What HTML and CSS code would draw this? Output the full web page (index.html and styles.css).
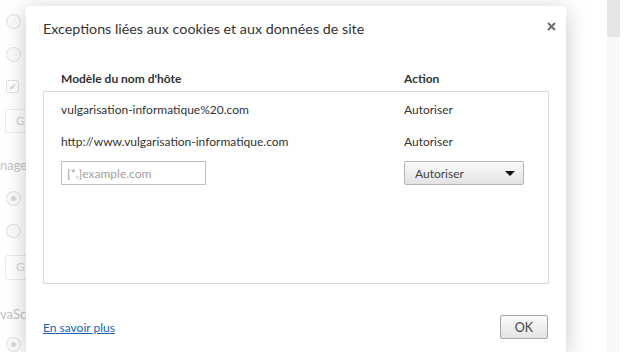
FILE: index.html
```html
<!DOCTYPE html>
<html>

<head>
    <meta charset="UTF-8">
    <title>Exceptions liées aux cookies</title>
    <link rel="stylesheet" href="styles.css">
</head>

<body>
    <div id="page">
        <div class="side">
            <div class="radio r1"></div>
            <div class="radio r2"></div>
            <div class="check">&#10004;</div>
            <div class="btn-ghost b1">G</div>
            <div class="side-label l1">nage</div>
            <div class="radio on r3"></div>
            <div class="radio r4"></div>
            <div class="btn-ghost b2">G</div>
            <div class="side-label l2">vaSc</div>
            <div class="radio on r5"></div>
        </div>
        <div class="scroll-track">
            <div class="scroll-thumb"></div>
        </div>
    </div>

    <div id="dialog">
        <div class="dialog-head">
            <div class="dialog-title">Exceptions liées aux cookies et aux données de site</div>
            <svg class="close" width="9" height="9" viewBox="0 0 9 9">
                <path d="M1 1 L8 8 M8 1 L1 8" stroke="#6e6e6e" stroke-width="2" />
            </svg>
        </div>
        <div class="dialog-body">
            <div class="list-head">
                <div class="col-host">Modèle du nom d'hôte</div>
                <div class="col-action">Action</div>
            </div>
            <div class="list">
                <div class="row">
                    <div class="col-host">vulgarisation-informatique%20.com</div>
                    <div class="col-action">Autoriser</div>
                </div>
                <div class="row">
                    <div class="col-host">http://www.vulgarisation-informatique.com</div>
                    <div class="col-action">Autoriser</div>
                </div>
                <div class="row row-new">
                    <div class="col-host"><input class="host-input" type="text" placeholder="[*.]example.com"></div>
                    <div class="col-action">
                        <div class="select">
                            <span>Autoriser</span>
                            <span class="arrow"></span>
                        </div>
                    </div>
                </div>
            </div>
        </div>
        <div class="dialog-foot">
            <a class="more" href="#">En savoir plus</a>
            <button class="ok">OK</button>
        </div>
    </div>
</body>

</html>
```

FILE: styles.css
```css
body {
    margin: 0;
    font-family: 'Lato', sans-serif;
    color: #333;
    background: #fff;
    overflow: hidden;
}

#page {
    display: flex;
    justify-content: space-between;
    height: 352px;
}

.side {
    display: flex;
    flex-direction: column;
    align-items: flex-start;
    padding-left: 6px;
    padding-top: 14px;
}

.radio {
    width: 13px;
    height: 13px;
    border: 1px solid #e2e2e2;
    border-radius: 50%;
    background: #fbfbfb;
    position: relative;
}

.r2 { margin-top: 18px; }
.r3 { margin-top: 17px; }
.r4 { margin-top: 18px; }
.r5 { margin-top: 14px; }

.radio.on::after {
    content: "";
    position: absolute;
    left: 4px;
    top: 4px;
    width: 5px;
    height: 5px;
    border-radius: 50%;
    background: #d8d8d8;
}

.check {
    width: 11px;
    height: 11px;
    border: 1px solid #e2e2e2;
    border-radius: 2px;
    font-size: 9px;
    line-height: 11px;
    text-align: center;
    color: #d0d0d0;
    margin-top: 18px;
}

.btn-ghost {
    width: 40px;
    height: 22px;
    margin-left: -1px;
    border: 1px solid #ececec;
    border-radius: 2px;
    font-size: 12px;
    line-height: 22px;
    padding-left: 10px;
    color: #d4d4d4;
}

.b1 { margin-top: 16px; }
.b2 { margin-top: 17px; height: 23px; }

.side-label {
    margin-left: -6px;
    font-size: 13px;
    line-height: 17px;
    color: #c4c4c4;
}

.l1 { margin-top: 24px; }
.l2 { margin-top: 26px; }

.scroll-track {
    width: 13px;
    margin-right: 3px;
    background: #f8f8f8;
}

.scroll-thumb {
    height: 37px;
    background: #e6e6e6;
}

/* the dialog runs on below the window edge */
#dialog {
    position: absolute;
    left: 26px;
    top: 6px;
    width: 540px;
    height: 346px;
    background: #fff;
    border-radius: 3px 3px 0 0;
    box-shadow: 0 4px 22px rgba(0, 0, 0, 0.22);
    display: flex;
    flex-direction: column;
}

.dialog-head {
    display: flex;
    justify-content: space-between;
    align-items: flex-start;
    padding: 13px 10px 0 17px;
}

.dialog-title {
    font-size: 14.3px;
    line-height: 20px;
    color: #333;
}

.close {
    margin-top: 3px;
}

.dialog-body {
    padding: 0 17px;
}

.list-head {
    display: flex;
    font-size: 12px;
    font-weight: bold;
    padding: 32px 0 0 18px;
    height: 20px;
}

.list {
    box-sizing: border-box;
    border: 1px solid #d9d9d9;
    height: 193px;
    padding-top: 1px;
}

.row {
    display: flex;
    align-items: center;
    height: 32px;
    padding-left: 17px;
    font-size: 12px;
}

.col-host {
    width: 343px;
}

.host-input {
    box-sizing: border-box;
    width: 145px;
    height: 24px;
    border: 1px solid #bfbfbf;
    font-family: 'Lato', sans-serif;
    font-size: 12px;
    padding: 0 5px;
    margin: 0;
}

.host-input::placeholder {
    color: #a0a0a0;
}

.select {
    box-sizing: border-box;
    width: 120px;
    height: 24px;
    border: 1px solid #b5b5b5;
    border-radius: 2px;
    background-image: linear-gradient(#fafafa, #e3e3e3);
    display: flex;
    align-items: center;
    justify-content: space-between;
    padding: 0 8px 0 10px;
    color: #444;
}

.arrow {
    width: 0;
    height: 0;
    border-left: 5px solid transparent;
    border-right: 5px solid transparent;
    border-top: 5px solid #111;
}

.dialog-foot {
    display: flex;
    justify-content: space-between;
    align-items: center;
    padding: 31px 18px 0 17px;
}

.more {
    font-size: 12px;
    color: #1a5fb4;
}

.ok {
    width: 48px;
    height: 24px;
    border: 1px solid #a8a8a8;
    border-radius: 2px;
    background-image: linear-gradient(#fafafa, #e4e4e4);
    font-family: 'Lato', sans-serif;
    font-size: 12.5px;
    color: #444;
    padding: 0;
}
```
